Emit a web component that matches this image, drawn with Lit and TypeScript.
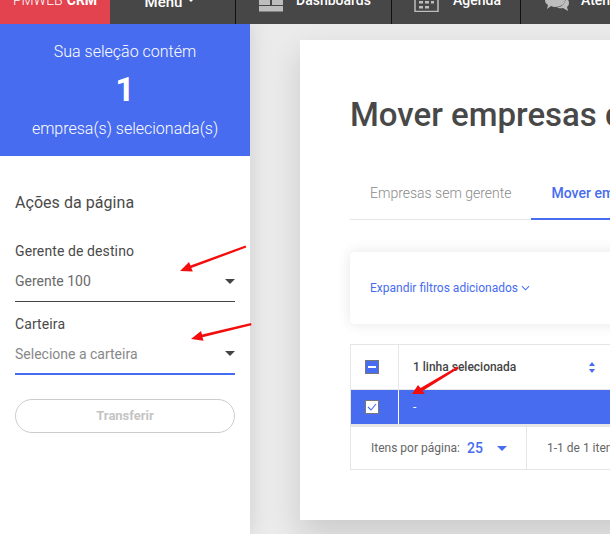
import { LitElement, html, css } from "lit";
import { customElement } from "lit/decorators.js";

@customElement("app-root")
export class AppRoot extends LitElement {
  static styles = css`
    :host { display: block; width: 610px; height: 534px; overflow: hidden; position: relative; font-family: Roboto, sans-serif; background: #ebebeb; color: #4a4a4a; }
    .nav { height: 24px; background: #474747; overflow: hidden; display: flex; position: relative; z-index: 2; }
    .nav-inner { display: flex; height: 48px; margin-top: -24px; color: #fff; font-size: 14px; font-weight: 500; flex: none; }
    .nav-item { display: flex; align-items: center; box-sizing: border-box; flex: none; }
    .nav-item svg { flex: none; }
    .brand { width: 110px; background: #e2434f; justify-content: center; font-weight: 300; gap: 4px; font-size: 14px; }
    .brand b { font-weight: 700; }
    .menu { width: 126px; justify-content: center; padding-right: 6px; gap: 6px; border-right: 1px solid #111; font-size: 15px; }
    .menu span { margin-top: 3px; }
    .caret-w { width: 0; height: 0; border: 3.5px solid transparent; border-top-color: #fff; margin-top: 4px; }
    .dash { width: 156px; border-right: 1px solid #111; padding-left: 22px; gap: 12px; }
    .agenda { width: 129px; border-right: 1px solid #111; padding-left: 22px; gap: 14px; }
    .aten { width: 120px; padding-left: 24px; gap: 12px; }
    .body { display: flex; height: 510px; }
    .side { width: 250px; flex: none; background: #fff; box-shadow: 0 0 20px rgba(0,0,0,.13); position: relative; z-index: 1; }
    .sel { height: 132px; box-sizing: border-box; background: #476cf0; color: #fff; text-align: center; padding-top: 18px; font-size: 16px; font-weight: 300; line-height: 19px; }
    .num { font-size: 34px; font-weight: 700; line-height: 40px; margin: 8px 0 10px; }
    .form { padding: 37px 15px 0; }
    .h { font-size: 16px; line-height: 20px; letter-spacing: .05px; margin-bottom: 28px; }
    .lab { font-size: 14px; line-height: 20px; letter-spacing: .1px; }
    .select { height: 40px; box-sizing: content-box; display: flex; align-items: center; justify-content: space-between; border-bottom: 1px solid #444; font-size: 14px; color: #6a6a6a; margin-bottom: 12px; }
    .select.on { height: 39px; border-bottom: 2px solid #476cf0; color: #888; margin-bottom: 24px; }
    .caret { width: 0; height: 0; border: 5px solid transparent; border-top: 5px solid #444; border-bottom: 0; }
    .btn { height: 34px; box-sizing: border-box; border: 1px solid #ccc; border-radius: 17px; color: #c4c4c4; font-size: 13px; font-weight: 700; display: flex; align-items: center; justify-content: center; padding-bottom: 1px; }
    .main { flex: 1; min-width: 0; padding: 16px 0 14px 50px; }
    .card { width: 700px; height: 480px; box-sizing: border-box; background: #fff; box-shadow: 0 14px 30px rgba(0,0,0,.14); padding: 55px 50px 0; }
    h1 { margin: 0; font-size: 33px; font-weight: 500; line-height: 40px; color: #484848; white-space: nowrap; }
    .tabs { display: flex; margin-top: 28px; height: 56px; border-bottom: 1px solid #e6e6e6; font-size: 14px; white-space: nowrap; }
    .tab { padding: 0 19px 0 20px; line-height: 60px; color: #8a8a8a; font-weight: 300; }
    .tab.on { padding: 0 20px 0 21px; color: #476cf0; font-weight: 500; border-bottom: 2px solid #476cf0; margin-bottom: -1px; height: 55px; }
    .filt { margin-top: 32px; height: 72px; border-radius: 4px; box-shadow: 0 0 14px rgba(0,0,0,.1); display: flex; align-items: center; padding-left: 20px; gap: 3px; color: #476cf0; font-size: 12px; }
    .tbl { margin-top: 20px; border: 1px solid #e6e6e6; border-bottom: 0; }
    .tr { display: flex; box-sizing: border-box; }
    .c1 { width: 48px; flex: none; box-sizing: border-box; border-right: 1px solid #e6e6e6; display: flex; align-items: center; justify-content: center; padding-right: 5px; }
    .c2 { flex: 1; display: flex; align-items: center; padding-left: 14px; font-size: 12px; font-weight: 500; color: #444; }
    .head { height: 45px; border-bottom: 1px solid #e6e6e6; }
    .sort { margin-left: 73px; display: flex; }
    .row { height: 37px; background: #476cf0; border-bottom: 3px solid #e6e6e6; }
    .row .c2 { color: #fff; font-weight: 400; padding-bottom: 1px; }
    .row .c1 { border-right: 1px solid #fff; }
    .box { width: 14px; height: 14px; box-sizing: border-box; border: 1px solid #777; display: flex; align-items: center; justify-content: center; }
    .box.m { background: #476cf0; }
    .box.c { background: #fff; }
    .foot { display: flex; height: 43px; box-sizing: border-box; border-bottom: 1px solid #e6e6e6; font-size: 12px; color: #666; align-items: stretch; }
    .f1 { width: 176px; flex: none; border-right: 1px solid #e6e6e6; display: flex; align-items: center; padding-left: 20px; box-sizing: border-box; }
    .f1 b { color: #476cf0; font-size: 14px; font-weight: 500; margin: 0 14px 0 7px; }
    .tri { width: 0; height: 0; border: 5px solid transparent; border-top: 5px solid #476cf0; border-bottom: 0; }
    .f2 { padding-left: 20px; display: flex; align-items: center; white-space: nowrap; }
    .arrows { position: absolute; inset: 0; pointer-events: none; z-index: 3; }
  `;

  render() {
    return html`
      <div class="nav"><div class="nav-inner">
        <div class="nav-item brand"><span>PMWEB</span><b>CRM</b></div>
        <div class="nav-item menu"><span>Menu</span><i class="caret-w"></i></div>
        <div class="nav-item dash">
          <svg width="26" height="24" viewBox="0 0 26 24" fill="#bdbdbd"><rect x="1" y="2" width="24" height="8"/><rect x="1" y="12" width="11" height="5"/><rect x="14" y="12" width="11" height="5"/><rect x="1" y="18" width="24" height="5.5"/></svg>
          <span>Dashboards</span>
        </div>
        <div class="nav-item agenda">
          <svg width="25" height="24" viewBox="0 0 25 24" fill="none" stroke="#bdbdbd" stroke-width="1.5"><rect x="1" y="1" width="23" height="22.5"/><g fill="#bdbdbd" stroke="none"><rect x="5" y="13" width="4" height="2.5"/><rect x="11" y="13" width="4" height="2.5"/><rect x="17" y="13" width="3" height="2.5"/><rect x="5" y="18" width="4" height="2.5"/><rect x="11" y="18" width="4" height="2.5"/></g></svg>
          <span>Agenda</span>
        </div>
        <div class="nav-item aten">
          <svg width="24" height="24" viewBox="0 0 24 24" fill="#bdbdbd"><path d="M10 2C4 2 0 7 0 12c0 2 1 4 3 5l-1 4 4-3c1 .5 3 1 4 1 6 0 10-3 10-7S16 2 10 2z"/><path d="M21 10c2 1 3 3 3 5 0 2-1 3-2 4l1 4-5-3c-2 .5-5 0-7-.5 5 0 9-3 10-9.500z"/></svg>
          <span>Atendimento</span>
        </div>
      </div></div>
      <div class="body">
        <aside class="side">
          <div class="sel">
            <div>Sua seleção contém</div>
            <div class="num">1</div>
            <div>empresa(s) selecionada(s)</div>
          </div>
          <div class="form">
            <div class="h">Ações da página</div>
            <div class="lab">Gerente de destino</div>
            <div class="select"><span>Gerente 100</span><i class="caret"></i></div>
            <div class="lab">Carteira</div>
            <div class="select on"><span>Selecione a carteira</span><i class="caret"></i></div>
            <div class="btn">Transferir</div>
          </div>
        </aside>
        <main class="main">
          <section class="card">
            <h1>Mover empresas de gerente</h1>
            <div class="tabs"><div class="tab">Empresas sem gerente</div><div class="tab on">Mover empresas</div></div>
            <div class="filt"><span>Expandir filtros adicionados</span>
              <svg width="9" height="6" viewBox="0 0 10 6" fill="none" stroke="#476cf0" stroke-width="1.2"><path d="M1 1l4 4 4-4"/></svg></div>
            <div class="tbl">
              <div class="tr head"><div class="c1"><span class="box m"><svg width="8" height="2"><rect width="8" height="2" fill="#fff"/></svg></span></div>
                <div class="c2"><span>1 linha selecionada</span><span class="sort"><svg width="6" height="11" viewBox="0 0 6 11" fill="#476cf0"><path d="M3 0l3 4H0zM3 11L0 7h6z"/></svg></span></div></div>
              <div class="tr row"><div class="c1"><span class="box c"><svg width="10" height="8" viewBox="0 0 10 8" fill="none" stroke="#476cf0" stroke-width="1.1"><path d="M1 4l3 3 5-6"/></svg></span></div>
                <div class="c2">-</div></div>
              <div class="foot"><div class="f1">Itens por página:<b>25</b><i class="tri"></i></div><div class="f2">1-1 de 1 itens</div></div>
            </div>
          </section>
        </main>
      </div>
      <svg class="arrows" viewBox="0 0 610 534" fill="#f40d0d" stroke="none">
        <path d="M180 271l9-9 1.500 3.500 55-20 .8 2-55 20.500 1.500 3.500z"/>
        <path d="M191 339l10-8 1 3.500 49-11.500 .5 2.200-49 12 1 3.500z"/>
        <path d="M412 394l6-9 2.500 3 37-21.500 1 2-36 22.500 2.500 3z"/>
      </svg>
    `;
  }
}
